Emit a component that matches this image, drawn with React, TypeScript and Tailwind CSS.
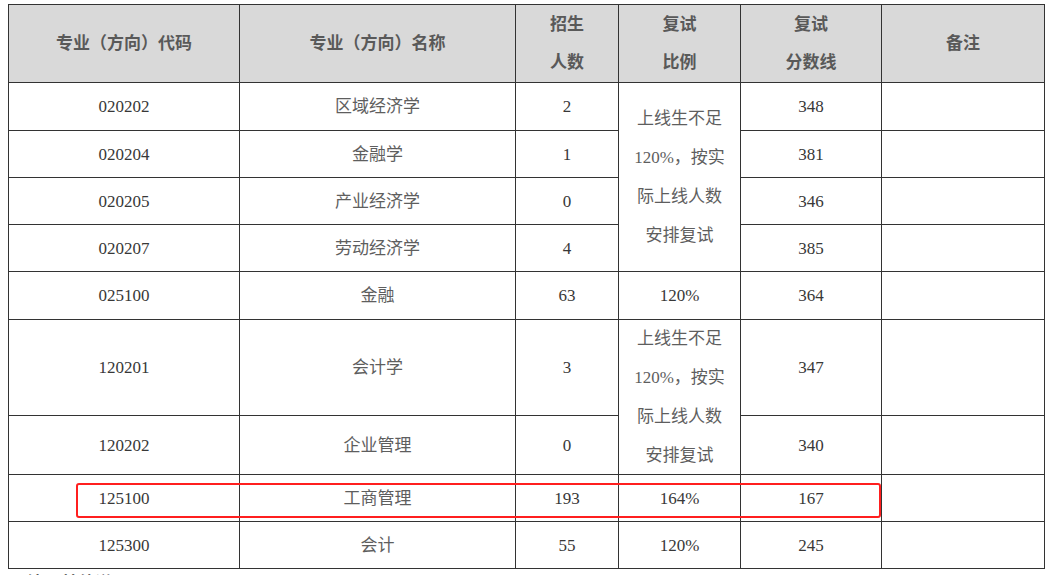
import React from "react";

const FONT = { fontFamily: '"Liberation Serif", "Noto Sans CJK SC", serif' };

function Cell({
  children,
  span,
  tone = "num",
}: {
  children: React.ReactNode;
  span?: "r4" | "r2";
  tone?: "num" | "zh";
}) {
  const spanCls = span === "r4" ? "row-span-4" : span === "r2" ? "row-span-2" : "";
  const toneCls = tone === "num" ? "text-[#383838]" : "text-[#5e5e5e]";
  return (
    <div className={`bg-white flex items-center justify-center text-center text-[17px] leading-[39px] ${spanCls} ${toneCls}`}>
      {children}
    </div>
  );
}

function Head({ children }: { children: React.ReactNode }) {
  return (
    <div className="bg-[#d9d9d9] flex items-center justify-center text-center text-[17px] leading-[38px] font-bold text-[#595959]">
      {children}
    </div>
  );
}

function Merged() {
  return (
    <div className="flex flex-col items-center">
      <span>上线生不足</span>
      <span>120%，按实</span>
      <span>际上线人数</span>
      <span>安排复试</span>
    </div>
  );
}

export default function App() {
  return (
    <div className="w-[1057px] h-[575px] overflow-hidden bg-white" style={FONT}>
      <div className="relative pl-[8px] pt-[4px]">
        <div className="grid w-fit gap-px p-px bg-[#333333] grid-cols-[230px_275px_102px_121px_140px_162px] grid-rows-[77px_47px_46px_46px_46px_47px_95px_58px_46px_46px]">
          <Head>专业（方向）代码</Head>
          <Head>专业（方向）名称</Head>
          <Head>
            <div className="flex flex-col">
              <span>招生</span>
              <span>人数</span>
            </div>
          </Head>
          <Head>
            <div className="flex flex-col">
              <span>复试</span>
              <span>比例</span>
            </div>
          </Head>
          <Head>
            <div className="flex flex-col">
              <span>复试</span>
              <span>分数线</span>
            </div>
          </Head>
          <Head>备注</Head>

          <Cell>020202</Cell>
          <Cell tone="zh">区域经济学</Cell>
          <Cell>2</Cell>
          <Cell span="r4" tone="zh">
            <Merged />
          </Cell>
          <Cell>348</Cell>
          <Cell>{""}</Cell>

          <Cell>020204</Cell>
          <Cell tone="zh">金融学</Cell>
          <Cell>1</Cell>
          <Cell>381</Cell>
          <Cell>{""}</Cell>

          <Cell>020205</Cell>
          <Cell tone="zh">产业经济学</Cell>
          <Cell>0</Cell>
          <Cell>346</Cell>
          <Cell>{""}</Cell>

          <Cell>020207</Cell>
          <Cell tone="zh">劳动经济学</Cell>
          <Cell>4</Cell>
          <Cell>385</Cell>
          <Cell>{""}</Cell>

          <Cell>025100</Cell>
          <Cell tone="zh">金融</Cell>
          <Cell>63</Cell>
          <Cell>120%</Cell>
          <Cell>364</Cell>
          <Cell>{""}</Cell>

          <Cell>120201</Cell>
          <Cell tone="zh">会计学</Cell>
          <Cell>3</Cell>
          <Cell span="r2" tone="zh">
            <Merged />
          </Cell>
          <Cell>347</Cell>
          <Cell>{""}</Cell>

          <Cell>120202</Cell>
          <Cell tone="zh">企业管理</Cell>
          <Cell>0</Cell>
          <Cell>340</Cell>
          <Cell>{""}</Cell>

          <Cell>125100</Cell>
          <Cell tone="zh">工商管理</Cell>
          <Cell>193</Cell>
          <Cell>164%</Cell>
          <Cell>167</Cell>
          <Cell>{""}</Cell>

          <Cell>125300</Cell>
          <Cell tone="zh">会计</Cell>
          <Cell>55</Cell>
          <Cell>120%</Cell>
          <Cell>245</Cell>
          <Cell>{""}</Cell>
        </div>

        <div className="absolute left-[76px] top-[483px] w-[805px] h-[35px] border-[2.5px] border-[#ff1f1f] rounded-[3px] pointer-events-none" />

        <div className="pl-[19px] pt-[3px] text-[17px] leading-[24px] font-bold text-[#404040]">
          注：其他说明
        </div>
      </div>
    </div>
  );
}
